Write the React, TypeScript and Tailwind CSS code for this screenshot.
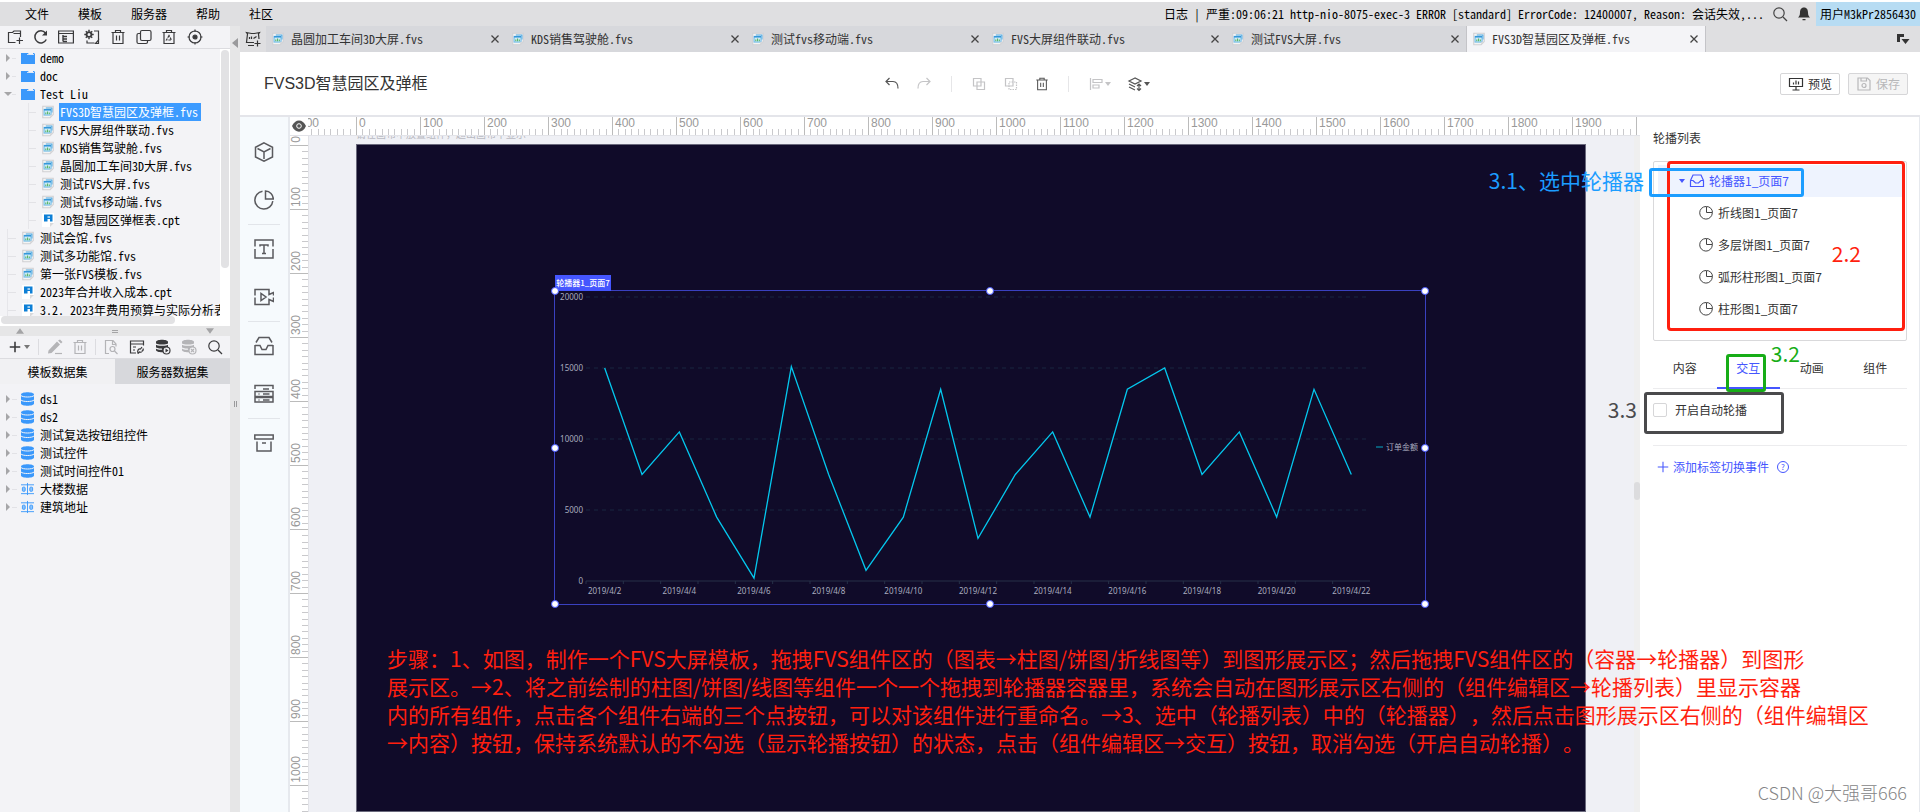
import React from "react";
import clsx from "clsx";

const SIM = "font-['Noto_Sans_Mono_CJK_SC','Noto_Sans_CJK_SC',monospace]";
const YAHEI = "font-['Noto_Sans_CJK_SC',sans-serif]";

/* ─── Icons ─────────────────────────────────────── */
type IconProps = { className?: string; children?: React.ReactNode };

function Icon16({ className, children }: IconProps) {
  return (
    <svg viewBox="0 0 16 16" className={clsx("size-4 shrink-0", className)} fill="none" stroke="currentColor" strokeWidth="1.2" aria-hidden="true">
      {children}
    </svg>
  );
}

function Icon20({ children }: IconProps) {
  return (
    <svg viewBox="0 0 20 20" className="size-5 shrink-0" fill="none" stroke="currentColor" strokeWidth="1.5" aria-hidden="true">
      {children}
    </svg>
  );
}

const FolderAdd = () => (
  <Icon16>
    <path d="M8.500 13.500H1.500V3.500h4l1.500-1.500h6.500V8M6.500 4.500h6.500M12.500 8.500v6.500M9.500 11.500h6.500" />
  </Icon16>
);
const Refresh = () => (
  <Icon16>
    <path d="M13.300 10.500A6 6 0 1 1 12.500 4" strokeWidth="1.500" />
    <path d="M14 1.500v5H9z" fill="currentColor" stroke="none" />
  </Icon16>
);
const TreeWindow = () => (
  <Icon16>
    <path d="M.6 2h14.800v12H.6zM.6 4.500h14.800" />
    <path d="M5 6v6.500M5 7.500h4M5 10h4M5 12.500h4" strokeWidth="1.400" />
  </Icon16>
);
const GearDoc = () => (
  <Icon16>
    <circle cx="5" cy="5.500" r="2.400" strokeWidth="1.800" />
    <path d="M5 .8v1.700M5 8.500v1.700M.3 5.500H2M8 5.500h1.700M1.800 2.300l1 1M7.200 7.700l1 1M8.200 2.300l-1 1M2.800 7.700l-1 1" strokeWidth="1.500" />
    <path d="M10 2h4.500v9M3 11.500V14h7.500" />
    <path d="M14.500 11v3.500H11.500z" />
  </Icon16>
);
const Trash = ({ className }: IconProps) => (
  <Icon16 className={className}>
    <path d="M1.500 3.500h13M3 3.500v11h10v-11M5.500 3.500V1.500h5v2M6.500 6.500v5M9.500 6.500v5" />
  </Icon16>
);
const Copies = () => (
  <Icon16>
    <rect x="4.500" y="1.500" width="10.500" height="10" rx="1.500" />
    <path d="M4 4.500H2.500a1.500 1.500 0 0 0-1.500 1.500v7a1.500 1.500 0 0 0 1.500 1.500H10a1.500 1.500 0 0 0 1.500-1.500v-1" />
  </Icon16>
);
const RecycleBin = () => (
  <Icon16>
    <path d="M1.500 3.500h13M3 3.500v11h10v-11M5.500 3.500V1.500h5v2" />
    <path d="M8 6.500 5.500 11h5z" strokeDasharray="2.500 1" />
  </Icon16>
);
const Target = () => (
  <Icon16>
    <circle cx="8" cy="8" r="6" />
    <circle cx="8" cy="8" r="2" fill="currentColor" />
    <path d="M8 .5V3M8 13v2.500M.5 8H3M13 8h2.500" />
  </Icon16>
);
const Search = () => (
  <Icon16>
    <circle cx="7" cy="7" r="5.200" />
    <path d="m11 11 4 4" />
  </Icon16>
);
const Bell = () => (
  <Icon16>
    <path d="M8 1.500c-3 0-4 2.500-4 5 0 3-1 4-2 5h12c-1-1-2-2-2-5 0-2.500-1-5-4-5zM6.500 13h3v1.200h-3z" fill="currentColor" stroke="none" />
  </Icon16>
);
const AddScreen = () => (
  <Icon16>
    <path d="M9 11.500H1.500L2.500 3l-1-1.500 5 1h3l5-1-1 1.500.5 5M4.500 8V6M6.500 8V5.500M8.500 7.500l3-2M3 14.500h6M12.500 9.500v6M9.500 12.500h6" />
  </Icon16>
);
const FvsFile = ({ className }: IconProps) => (
  <Icon16 className={className}>
    <path d="M2 1.500h12V11l-3.500 3.500H2z" fill="#f4f4f4" stroke="#cfcfd2" />
    <path d="M5.500 3.500h7v5" stroke="#4aa5e0" />
    <rect x="3.500" y="5" width="8" height="6.500" fill="#cfeaf7" stroke="#6fbbe8" />
    <path d="M3.500 5.500h8" stroke="#2b92d8" strokeWidth="1.600" />
    <path d="M5.500 10.500v-2M7.500 10.500v-3M9.500 10.500v-2" stroke="#57b562" />
    <path d="M14 11h-3.500v3.500z" fill="#d8d8da" stroke="none" />
  </Icon16>
);
const CptFile = () => (
  <Icon16>
    <path d="M2 1h12v10l-4 4H2z" fill="#fff" stroke="none" />
    <path d="M14 11h-4v4z" fill="#d8d8da" stroke="none" />
    <path d="M4 2.500h8.500v7H10V7H7.500v2.500H4z" fill="#0d7fd6" stroke="none" />
    <path d="M7.500 5H10" stroke="#fff" />
  </Icon16>
);
const Folder = () => (
  <svg viewBox="0 0 14 12" className="w-3.5 h-3 shrink-0" aria-hidden="true">
    <path d="M0 1h7l1 1.500h4V1h1l1 1v10H0z" fill="#3a98fb" />
    <path d="M6 2.500h7" stroke="#f3f3f6" strokeWidth=".8" />
  </svg>
);
const Database = () => (
  <svg viewBox="0 0 13 14" className="w-[13px] h-3.5 shrink-0" aria-hidden="true">
    <path d="M0 2.500C0-.5 13-.5 13 2.500v9c0 3-13 3-13 0z" fill="#3a98fb" />
    <path d="M0 3.500c1.500 2 11.500 2 13 0M0 8c1.500 2 11.500 2 13 0" stroke="#f3f3f6" fill="none" />
  </svg>
);
const RelationTable = () => (
  <svg viewBox="0 0 14 14" className="w-[13px] h-3.5 shrink-0" fill="none" stroke="#3a98fb" aria-hidden="true">
    <path d="M0 2.500h14M0 12h14M7 .5v13" />
    <rect x="1.500" y="5" width="3" height="4.500" rx="1" fill="#8cc4fd" />
    <rect x="9.500" y="5" width="3" height="4.500" rx="1" fill="#8cc4fd" />
  </svg>
);
const Pie = ({ className }: IconProps) => (
  <Icon16 className={className}>
    <path d="M8 1.500A6.300 6.300 0 1 0 14.300 8" strokeWidth="1" />
    <path d="M8.500 1.500v6h6a6 6 0 0 0-6-6z" strokeWidth="1" />
  </Icon16>
);
const Inbox = () => (
  <Icon16>
    <path d="M1.500 7.500v6h13v-6M1.500 7.500 4 2h8l2.500 5.500M1.500 7.500H4l2.500 2.500h3L12 7.500h2.500" />
  </Icon16>
);

function Caret({ className }: IconProps) {
  return (
    <svg viewBox="0 0 6 4" className={clsx("w-1.5 h-1 shrink-0", className)} fill="currentColor" aria-hidden="true">
      <path d="M0 0h6L3 4z" />
    </svg>
  );
}

/* ─── Top menu ──────────────────────────────────── */
const menus = ["文件", "模板", "服务器", "帮助", "社区"];

function MenuBar() {
  return (
    <header className={clsx("mt-[2px] h-6 shrink-0 flex items-center bg-[#dfdfe1] text-[12px] leading-6 text-black", SIM)}>
      <nav className="flex gap-[29px] pl-[25px]">
        {menus.map(m => <button key={m}>{m}</button>)}
      </nav>
      <p className="ml-auto whitespace-pre">日志 | 严重:09:06:21 http-nio-8075-exec-3 ERROR [standard] ErrorCode: 12400007, Reason: 会话失效,...</p>
      <button aria-label="搜索" className="ml-2 text-[#444]"><Search /></button>
      <button aria-label="通知" className="ml-2 text-[#333]"><Bell /></button>
      <button className="ml-1 h-6 w-[104px] pl-1 text-left bg-[#b7dcf3]">用户M3kPr2856430</button>
    </header>
  );
}

/* ─── Template tree ─────────────────────────────── */
type Kind = "folder" | "fvs" | "cpt";
type Node = { name: string; kind: Kind; level: 0 | 1; open?: boolean; selected?: boolean };

const tree: Node[] = [
  { name: "demo", kind: "folder", level: 0 },
  { name: "doc", kind: "folder", level: 0 },
  { name: "Test Liu", kind: "folder", level: 0, open: true },
  { name: "FVS3D智慧园区及弹框.fvs", kind: "fvs", level: 1, selected: true },
  { name: "FVS大屏组件联动.fvs", kind: "fvs", level: 1 },
  { name: "KDS销售驾驶舱.fvs", kind: "fvs", level: 1 },
  { name: "晶圆加工车间3D大屏.fvs", kind: "fvs", level: 1 },
  { name: "测试FVS大屏.fvs", kind: "fvs", level: 1 },
  { name: "测试fvs移动端.fvs", kind: "fvs", level: 1 },
  { name: "3D智慧园区弹框表.cpt", kind: "cpt", level: 1 },
  { name: "测试会馆.fvs", kind: "fvs", level: 0 },
  { name: "测试多功能馆.fvs", kind: "fvs", level: 0 },
  { name: "第一张FVS模板.fvs", kind: "fvs", level: 0 },
  { name: "2023年合并收入成本.cpt", kind: "cpt", level: 0 },
  { name: "3.2. 2023年费用预算与实际分析表", kind: "cpt", level: 0 },
];

function Arrow({ open }: { open?: boolean }) {
  return (
    <svg viewBox="0 0 8 8" className="size-2 shrink-0" fill="#a6a6a8" aria-hidden="true">
      <path d={open ? "M0 2h8L4 6z" : "M2 0l4 4-4 4z"} />
    </svg>
  );
}

function TreeRow({ node }: { node: Node }) {
  return (
    <li className="flex h-[18px] items-center whitespace-nowrap">
      <span className={clsx("flex items-center shrink-0", node.level ? "w-10 pl-7" : "w-5 pl-1")}>
        {node.kind === "folder" ? <Arrow open={node.open} /> : <span className={clsx("h-[18px] border-l border-[#e6e6ea]", !node.level && "ml-[3px]")} />}
        <span className="h-px flex-1 mr-1 bg-[#e2e2e6]" />
      </span>
      <span className="flex w-4 shrink-0 justify-center">
        {node.kind === "folder" && <Folder />}
        {node.kind === "fvs" && <FvsFile className="!size-3.5" />}
        {node.kind === "cpt" && <CptFile />}
      </span>
      <button className={clsx("ml-[3px] h-[18px] px-px", node.selected && "bg-[#3c9bff] pr-[3px] text-white")}>{node.name}</button>
    </li>
  );
}

const treeTools: [string, () => React.ReactNode][] = [
  ["新建文件夹", FolderAdd],
  ["刷新", Refresh],
  ["目录", TreeWindow],
  ["模板设置", GearDoc],
  ["删除", () => <Trash />],
  ["复制", Copies],
  ["回收站", RecycleBin],
  ["定位", Target],
];

function TemplatePanel() {
  return (
    <section className="shrink-0">
      <div className="flex h-[23px] items-center border-b border-[#dcdce0] pl-[7px] text-[#3a3a3c]">
        <div className="flex w-[196px] justify-between">
          {treeTools.map(([label, Glyph]) => <button key={label} aria-label={label}><Glyph /></button>)}
        </div>
      </div>
      <div className="flex h-[267px]">
        <ul className="min-w-0 flex-1 overflow-hidden">
          {tree.map(n => <TreeRow key={n.name} node={n} />)}
        </ul>
        <div className="w-[10px] bg-white px-px pt-[1px]">
          <div className="h-[218px] rounded bg-[#e2e2e4]" />
        </div>
      </div>
      <div className="h-[10px] bg-white pl-px">
        <div className="h-2 w-[174px] rounded bg-[#e2e2e4]" />
      </div>
    </section>
  );
}

/* ─── Data sets ─────────────────────────────────── */
const datasets = [
  { name: "ds1", relation: false },
  { name: "ds2", relation: false },
  { name: "测试复选按钮组控件", relation: false },
  { name: "测试控件", relation: false },
  { name: "测试时间控件01", relation: false },
  { name: "大楼数据", relation: true },
  { name: "建筑地址", relation: true },
];

function DatasetPanel() {
  return (
    <section>
      <div className="flex h-[10px] items-center justify-between bg-[#e6e6e7] px-4 text-[#a4a4a6]">
        <Caret className="rotate-180 !w-2 !h-1.5" />
        <span className="h-[3px] w-1.5 border-y border-current" />
        <Caret className="!w-2 !h-1.5" />
      </div>
      <div className="flex h-[23px] items-center border-b border-[#dcdce0] pl-2 text-[#3a3a3c]">
        <button aria-label="新增数据集" className="flex items-center gap-[2px]">
          <Icon16 className="!size-3.5"><path d="M8 2v12M2 8h12" strokeWidth="1.800" /></Icon16>
          <Caret className="text-[#777]" />
        </button>
        <span className="mx-2 h-4 w-px bg-[#dcdce0]" />
        <div className="flex gap-[9px] text-[#b4b4b7]">
          <button aria-label="编辑">
            <Icon16><path d="M1.500 11.500 10 2.500l3 3-8.500 8.500-3.500.5zM11 1.500l2-1 2.500 2.500-1.500 1.500z" fill="currentColor" stroke="none" /><path d="M8 14.500h7" /></Icon16>
          </button>
          <button aria-label="删除数据集"><Trash /></button>
        </div>
        <span className="mx-[7px] h-4 w-px bg-[#dcdce0]" />
        <div className="flex gap-[10px]">
          <button aria-label="预览" className="text-[#b4b4b7]">
            <Icon16><path d="M6 14.500H2.500v-13H10L13 5v2.500M9.500 1.500v4H13" /><circle cx="9.500" cy="10" r="2.500" /><path d="m11.500 12 3 3" /></Icon16>
          </button>
          <button aria-label="连接">
            <Icon16><path d="M7 14H1.500V2h13v4.500M1.500 5h13M4 8h3M4 11h2" /><path d="M9 14.500c-1-3 .5-5 2.500-4.500l1.500-2M12.500 12.500c2-1 2-2 1.500-3M9 14.500l1.500-1.500 2 .5" /></Icon16>
          </button>
          <button aria-label="执行">
            <Icon16>
              <path d="M1 3c0-3 12-3 12 0v8c0 3-12 3-12 0z" fill="currentColor" stroke="none" />
              <path d="M1 5c1.500 1.500 10.500 1.500 12 0M1 9c1.500 1 5 1.500 6 1" stroke="#f3f3f6" />
              <circle cx="11.500" cy="11.500" r="3.500" fill="#f3f3f6" /><path d="m10.500 9.500 3 2-3 2z" fill="currentColor" stroke="none" />
            </Icon16>
          </button>
          <button aria-label="停止" className="text-[#b4b4b7]">
            <Icon16>
              <path d="M1 3c0-3 12-3 12 0v8c0 3-12 3-12 0z" fill="currentColor" stroke="none" />
              <path d="M1 5c1.500 1.500 10.500 1.500 12 0M1 9c1.500 1 5 1.500 6 1" stroke="#f3f3f6" />
              <circle cx="11.500" cy="11.500" r="3.500" fill="#f3f3f6" /><path d="m10 10 3 3M13 10l-3 3" />
            </Icon16>
          </button>
          <button aria-label="搜索数据集"><Search /></button>
        </div>
      </div>
      <div className="grid h-[25px] grid-cols-2">
        <button className="bg-[#f1f1f3]">模板数据集</button>
        <button className="bg-[#d7d8dc]">服务器数据集</button>
      </div>
      <ul className="pt-1.5">
        {datasets.map(d => (
          <li key={d.name} className="flex h-[18px] items-center">
            <span className="flex w-[21px] items-center pl-1">
              <Arrow />
              <span className="h-px flex-1 mr-1 bg-[#e2e2e6]" />
            </span>
            {d.relation ? <RelationTable /> : <Database />}
            <button className="ml-1.5">{d.name}</button>
          </li>
        ))}
      </ul>
    </section>
  );
}

/* ─── Document tabs ─────────────────────────────── */
const docs = [
  "晶圆加工车间3D大屏.fvs",
  "KDS销售驾驶舱.fvs",
  "测试fvs移动端.fvs",
  "FVS大屏组件联动.fvs",
  "测试FVS大屏.fvs",
  "FVS3D智慧园区及弹框.fvs",
];

function DocTabs() {
  return (
    <div className={clsx("flex h-[26px] shrink-0 items-stretch bg-[#dfdfe1] text-[12px] text-[#333]", SIM)}>
      <button aria-label="新建大屏" className="flex w-[26px] items-center justify-center"><AddScreen /></button>
      {docs.map((d, i) => {
        const active = i === docs.length - 1;
        return (
          <div key={d} className={clsx("flex w-60 min-w-0 items-center pl-[5px] pr-[5px]", active ? "border-x border-[#c4c4c8] bg-[#f4f4f7]" : "bg-[#d7d8dc]")}>
            <FvsFile className="!size-3.5" />
            <button className="ml-1.5 flex-1 truncate text-left">{d}</button>
            <button aria-label={`关闭 ${d}`}>
              <svg viewBox="0 0 12 12" className="size-3" stroke="#444" strokeWidth="1.300" aria-hidden="true"><path d="m2.500 2.500 7 7M9.500 2.500l-7 7" /></svg>
            </button>
          </div>
        );
      })}
      <button aria-label="全部标签" className="ml-auto mr-[9px]">
        <Icon16><path d="M2 3h7v3H5v5H2zM6.500 8h8l-4 5z" fill="currentColor" stroke="none" /></Icon16>
      </button>
    </div>
  );
}

/* ─── Designer header ───────────────────────────── */
function DesignerHeader() {
  return (
    <div className="grid h-[65px] shrink-0 grid-cols-[9fr_auto_11fr] items-center border-b-2 border-[#e4e5ea] bg-white pl-6 pr-3">
      <h1 className="text-[16px] text-[#333] font-['Liberation_Sans','Noto_Sans_CJK_SC',sans-serif]">FVS3D智慧园区及弹框</h1>
      <div className="flex items-center gap-4 text-[#555]">
        <button aria-label="撤销"><Icon16><path d="M5.500 2 2 5.500 5.500 9M2 5.500h7c3.500 0 5 2.500 5 7" /></Icon16></button>
        <button aria-label="重做" className="text-[#c4c4c6]"><Icon16><path d="M10.500 2 14 5.500 10.500 9M14 5.500H7c-3.500 0-5 2.500-5 7" /></Icon16></button>
        <span className="mx-[3px] h-4 w-px bg-[#e6e6e8]" />
        <button aria-label="组合" className="text-[#c4c4c6]"><Icon16><path d="M2.500 2.500h7.500V10H2.500zM6 6h7.500v7.500H6z" /></Icon16></button>
        <button aria-label="取消组合" className="text-[#c4c4c6]"><Icon16><path d="M2.500 2.500h7.500V10H2.500z" /><path d="M6 6h7.500v7.500H6z" strokeDasharray="1.500 1" /></Icon16></button>
        <button aria-label="删除组件"><Trash className="!size-3.5" /></button>
        <span className="mx-[3px] h-4 w-px bg-[#e6e6e8]" />
        <button aria-label="对齐" className="flex items-center gap-px text-[#c4c4c6]">
          <Icon16><path d="M2.500 2v12M5 3.500h9v3H5zM5 9h6v3H5z" /></Icon16><Caret />
        </button>
        <button aria-label="层级" className="flex items-center gap-px">
          <Icon16><path d="M8 2 2 5l6 3 6-3zM2 8l6 3M2 11l6 3M12 8v6M10 10l2-2 2 2M10 12.500l2 2 2-2" /></Icon16><Caret />
        </button>
      </div>
      <div className={clsx("flex justify-end gap-2 text-[12px]", YAHEI)}>
        <button className="flex h-[22px] w-[60px] items-center justify-center gap-1 rounded-[2px] border border-[#d6d6d8] text-[#333]">
          <Icon16><path d="M1.500 2.500h13v8h-13zM8 10.500V14M4.500 14h7M5.500 8.500v-2M8 8.500v-4M10.500 8.500v-3" /></Icon16>预览
        </button>
        <button disabled className="flex h-[22px] w-[60px] items-center justify-center gap-1 rounded-[2px] border border-[#d6d6d8] bg-[#f5f5f5] text-[#b8b8ba]">
          <Icon16><path d="M2 2h9.500L14 4.500V14H2zM5 2v3h5.500V2" /><circle cx="8" cy="9.500" r="2" /></Icon16>保存
        </button>
      </div>
    </div>
  );
}

/* ─── Component rail ────────────────────────────── */
const railGroups: [string, React.ReactNode][][] = [
  [
    ["三维", <path key="a" d="M10 .8 18.500 5.300v9.700L10 19.200 1.500 15V5.300zM3.500 6.500 10 10l6.500-3.500M10 10v7" />],
    ["图表", <path key="b" d="M8.500 1.200a9 9 0 1 0 10.300 10M11.500 1v8h7.800a8 8 0 0 0-7.800-8z" />],
  ],
  [
    ["文本", <path key="c" d="M1 7.500V1h18v6.500M1 10v9h18v-9M6 7.500V6h8v1.500M10 6v8.500M8 14.500h4" />],
    ["媒体", <path key="d" d="M1 8.500v-6h14v5l4.500-2v3M1 10.500v7h14v-5l4.500 2v-4M7 6.500v7l5-3.500z" />],
  ],
  [
    ["容器", <path key="e" d="M1 9v9.500h18V9M2 6.500 5 1.500h10l3 5M1 9.500h5l2 4h4l2-4h5" />],
    ["控件", <path key="f" d="M1 5V1.500h18V5M9 5h6M1 7.500h18v5H1zM1 13.500h18V18H1zM4.500 10h1M9 10h6.500M4.500 16h1M9 16h6.500" />],
  ],
  [["素材", <path key="g" d="M.8 2h18.400v4H.8zM3 8.500V18h14V8.500M8 10h4" />]],
];

function ComponentRail() {
  return (
    <aside className="flex w-[50px] shrink-0 flex-col border-r-2 border-[#e6e9ee] bg-[#f6fafd] pt-[11px] text-[#5a5a5e]">
      {railGroups.map((group, i) => (
        <div key={i} className={clsx("mx-2 flex flex-col", i > 0 && "border-t border-[#e2e5ea]")}>
          {group.map(([label, shape]) => (
            <button key={label} aria-label={label} className="flex h-12 items-center justify-center"><Icon20>{shape}</Icon20></button>
          ))}
        </div>
      ))}
    </aside>
  );
}

/* ─── Rulers ────────────────────────────────────── */
const RULER_TEXT = "text-[12px] leading-none text-[#999] font-['Liberation_Sans',sans-serif]";

function RulerCellX({ label }: { label: number }) {
  return (
    <div className="relative flex w-16 shrink-0 items-end border-l border-[#bbb]">
      <span className={clsx("absolute left-[2px] top-0", RULER_TEXT)}>{label}</span>
      {Array.from({ length: 10 }, (_, i) => <i key={i} className={clsx("h-1.5 flex-1", i > 0 && "border-l border-[#c9c9cc]")} />)}
    </div>
  );
}

function RulerCellY({ label, first }: { label: number; first?: boolean }) {
  return (
    <div className={clsx("relative flex shrink-0 flex-col items-end justify-end overflow-hidden border-b border-[#bbb]", first ? "h-2.5" : "h-16")}>
      <span className={clsx("absolute bottom-[2px] left-0 rotate-180 [writing-mode:vertical-rl]", RULER_TEXT)}>{label}</span>
      {!first && Array.from({ length: 10 }, (_, i) => <i key={i} className={clsx("w-1.5 flex-1", i < 9 && "border-b border-[#c9c9cc]")} />)}
    </div>
  );
}

/* ─── Line chart ────────────────────────────────── */
const orders = [15000, 7500, 10500, 4500, 200, 15100, 7500, 750, 4500, 13500, 3000, 7500, 10500, 4500, 13500, 15000, 7500, 10500, 4500, 13500, 7500];
const CHART = { left: 31, right: 815, top: 6, bottom: 290, max: 20000 };

function LineChart() {
  const step = (CHART.right - CHART.left) / orders.length;
  const px = (i: number) => CHART.left + step * (i + 0.5);
  const py = (v: number) => CHART.bottom - (v / CHART.max) * (CHART.bottom - CHART.top);
  return (
    <svg viewBox="0 0 870 313" className="block h-[313px] w-[870px] font-['Noto_Sans','Noto_Sans_CJK_SC',sans-serif] text-[8px]" fill="#a9acbf">
      {[20000, 15000, 10000, 5000, 0].map(v => (
        <g key={v}>
          <line x1={CHART.left} x2={CHART.right} y1={py(v)} y2={py(v)} stroke={v ? "#182640" : "#263149"} strokeDasharray={v ? "4 4" : undefined} />
          <text x={28} y={py(v) + 3} textAnchor="end">{v}</text>
        </g>
      ))}
      {orders.map((_, i) => (
        <g key={i}>
          <line x1={CHART.left + step * i} x2={CHART.left + step * i} y1={CHART.bottom} y2={CHART.bottom + 3} stroke="#263149" />
          {i % 2 === 0 && <text x={px(i)} y={303} textAnchor="middle">{`2019/4/${i + 2}`}</text>}
        </g>
      ))}
      <polyline points={orders.map((v, i) => `${px(i)},${py(v)}`).join(" ")} fill="none" stroke="#04c8ee" strokeWidth="1.3" />
      <line x1="821" x2="828" y1="156" y2="156" stroke="#04a9c4" />
      <text x="831" y="159">订单金额</text>
    </svg>
  );
}

const handles = [
  "left-0 top-0", "left-1/2 top-0", "left-full top-0",
  "left-0 top-1/2", "left-full top-1/2",
  "left-0 top-full", "left-1/2 top-full", "left-full top-full",
];

function Stage() {
  return (
    <main className={clsx("relative min-w-0 flex-1 overflow-hidden bg-[#eff0f5]", YAHEI)}>
      <p className="absolute left-[47px] top-[-9px] text-[10px] leading-[14px] text-[#b9bac2]">请在画布中放置组件，超出画布不显示</p>
      <div className="absolute inset-y-0 left-[47px] right-[54px] top-[8px] border border-[#6a697c] bg-[#100b29]">
        <div className="absolute left-[197px] top-[145px] border border-[#3a41c0]">
          <LineChart />
          <span className="absolute bottom-full left-0 h-4 w-[56px] bg-[#4556fe] text-center text-[8px] font-medium leading-4 text-white whitespace-nowrap">轮播器1_页面7</span>
          {handles.map(h => (
            <i key={h} className={clsx("absolute size-2 -translate-1/2 rounded-full border border-[#4556fe] bg-white", h)} />
          ))}
        </div>
      </div>
      <div className="absolute inset-y-0 right-0 w-1.5 bg-[#efefef]">
        <div className="mt-[346px] h-[18px] rounded bg-[#dcdcde]" />
      </div>
    </main>
  );
}

function Workspace() {
  return (
    <div className="flex min-w-0 flex-1 flex-col">
      <div className="flex h-[19px] shrink-0 overflow-hidden border-b border-[#e2e3e8] bg-white">
        <button aria-label="显示标尺" className="flex w-[18px] shrink-0 items-center justify-center">
          <svg viewBox="0 0 14 12" className="w-3.5 h-3" aria-hidden="true">
            <path d="M0 6c3-7.500 11-7.500 14 0-3 7.500-11 7.500-14 0z" fill="#555" />
            <circle cx="7" cy="6" r="2.300" fill="#555" stroke="#fff" />
          </svg>
        </button>
        <div className="flex w-12 shrink-0 justify-end overflow-hidden"><RulerCellX label={-100} /></div>
        {Array.from({ length: 20 }, (_, i) => <RulerCellX key={i} label={i * 100} />)}
        <span className="border-l border-[#bbb]" />
      </div>
      <div className="flex min-h-0 flex-1">
        <div className="flex w-[19px] shrink-0 flex-col overflow-hidden border-r border-[#e2e3e8] bg-white">
          <RulerCellY label={0} first />
          {Array.from({ length: 11 }, (_, i) => <RulerCellY key={i} label={(i + 1) * 100} />)}
        </div>
        <Stage />
      </div>
    </div>
  );
}

/* ─── Property panel ────────────────────────────── */
const children = ["折线图1_页面7", "多层饼图1_页面7", "弧形柱形图1_页面7", "柱形图1_页面7"];
const tabs = ["内容", "交互", "动画", "组件"];

function PropertyPanel() {
  return (
    <aside className={clsx("w-[280px] shrink-0 border-r border-[#e6e9ee] bg-white pl-[13px] pr-3 pt-3 text-[12px] text-[#333]", YAHEI)}>
      <h2 className="leading-[18px]">轮播列表</h2>
      <ul className="mt-3.5 h-[180px] rounded-[2px] border border-[#d9d9db] px-1 pt-[3px]">
        <li>
          <button className="flex h-8 w-full items-center bg-[#eef3fe] pl-[21px] text-[#4556fe]">
            <Caret /><span className="mx-1"><Inbox /></span>轮播器1_页面7
          </button>
        </li>
        {children.map(c => (
          <li key={c}>
            <button className="flex h-8 w-full items-center gap-1 pl-10"><Pie className="text-[#444]" />{c}</button>
          </li>
        ))}
      </ul>
      <div className="mt-[9px] grid h-[39px] grid-cols-4 border-b border-[#ececee]">
        {tabs.map(t => (
          <button key={t} className={clsx("-mb-px border-b-2 pb-[2px]", t === "交互" ? "border-[#4556fe] text-[#4556fe]" : "border-transparent")}>{t}</button>
        ))}
      </div>
      <label className="flex h-[57px] items-center gap-2 border-b border-[#ececee] pb-3.5">
        <input type="checkbox" className="size-3.5 appearance-none rounded-[2px] border border-[#d6d6d8] bg-white" />
        开启自动轮播
      </label>
      <div className="mt-3 flex h-[18px] items-center pl-[3px] text-[#4556fe]">
        <button className="flex items-center">
          <Icon16 className="!size-3.5"><path d="M8 2v12M2 8h12" /></Icon16>
          <span className="ml-[3px]">添加标签切换事件</span>
        </button>
        <button aria-label="帮助说明" className="ml-2 flex size-3 items-center justify-center rounded-full border border-current text-[8px] leading-none">?</button>
      </div>
    </aside>
  );
}

/* ─── Annotations drawn over the page ───────────── */
const steps = [
  "步骤：1、如图，制作一个FVS大屏模板，拖拽FVS组件区的（图表→柱图/饼图/折线图等）到图形展示区；然后拖拽FVS组件区的（容器→轮播器）到图形",
  "展示区。→2、将之前绘制的柱图/饼图/线图等组件一个一个拖拽到轮播器容器里，系统会自动在图形展示区右侧的（组件编辑区→轮播列表）里显示容器",
  "内的所有组件，点击各个组件右端的三个点按钮，可以对该组件进行重命名。→3、选中（轮播列表）中的（轮播器），然后点击图形展示区右侧的（组件编辑区",
  "→内容）按钮，保持系统默认的不勾选（显示轮播按钮）的状态，点击（组件编辑区→交互）按钮，取消勾选（开启自动轮播）。",
];

function Annotations() {
  return (
    <div className={clsx("pointer-events-none absolute inset-0 overflow-hidden text-[21px] leading-7 [text-spacing-trim:space-all] whitespace-nowrap", YAHEI)}>
      <div className="absolute right-[15px] top-[161px] h-[170px] w-[238px] rounded border-3 border-[#ff1f0f]" />
      <div className="absolute right-[116px] top-[168px] h-[29px] w-[155px] rounded-[3px] border-3 border-[#1c9dff]" />
      <div className="absolute right-[154px] top-[354px] h-[38px] w-10 rounded-[3px] border-3 border-[#17ad17]" />
      <div className="absolute right-[136px] top-[392px] h-[42px] w-[140px] rounded-[3px] border-3 border-[#4a4a4c]" />
      <span className="absolute right-[276px] top-[166px] text-[#1c9dff]">3.1、选中轮播器</span>
      <span className="absolute right-[59px] top-[239px] text-[#ff1f0f]">2.2</span>
      <span className="absolute right-[120px] top-[339px] text-[#17ad17]">3.2</span>
      <span className="absolute right-[283px] top-[395px] text-[#4a4a4c]">3.3</span>
      <div className="absolute left-[387px] top-[644px] text-[#ff1f0f]">
        {steps.map(s => <p key={s}>{s}</p>)}
      </div>
      <span className="absolute right-[13px] top-[778px] text-[18px] font-light text-[#858587]">CSDN @大强哥666</span>
    </div>
  );
}

export default function App() {
  return (
    <div className="relative flex h-screen flex-col overflow-hidden bg-white">
      <MenuBar />
      <div className="flex min-h-0 flex-1">
        <div className={clsx("w-[230px] shrink-0 bg-[#f3f3f6] text-[12px] leading-[18px] text-black", SIM)}>
          <TemplatePanel />
          <DatasetPanel />
        </div>
        <div className="flex w-[10px] shrink-0 flex-col items-center justify-between bg-[#e6e6e7] pt-3 text-[#9a9a9c]">
          <svg viewBox="0 0 6 10" className="h-2.5 w-1.5" fill="currentColor" aria-hidden="true"><path d="M6 0v10L0 5z" /></svg>
          <span className="h-1.5 w-[3px] border-x border-current" />
          <span className="h-[52px] w-px" />
        </div>
        <div className="flex min-w-0 flex-1 flex-col">
          <DocTabs />
          <DesignerHeader />
          <div className="flex min-h-0 flex-1">
            <ComponentRail />
            <Workspace />
            <PropertyPanel />
          </div>
        </div>
      </div>
      <Annotations />
    </div>
  );
}
